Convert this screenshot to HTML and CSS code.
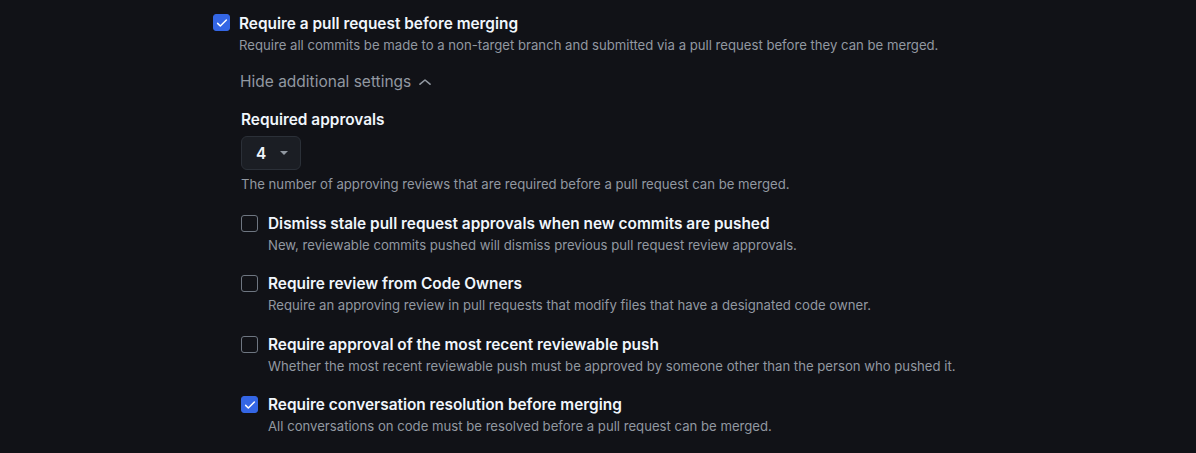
FILE: index.html
```html
<!DOCTYPE html>
<html>
<head>
<meta charset="utf-8">
<link rel="stylesheet" href="styles.css">
</head>
<body>
<div class="page">
  <div class="rule">
    <div class="row">
      <span class="cb checked"><svg viewBox="0 0 16 16" width="14" height="14"><path d="M3 8.4l3.1 3.1L13 4.6" fill="none" stroke="#fff" stroke-width="1.7" stroke-linecap="round" stroke-linejoin="round"/></svg></span>
      <div class="text">
        <div class="title">Require a pull request before merging</div>
        <div class="desc">Require all commits be made to a non-target branch and submitted via a pull request before they can be merged.</div>
      </div>
    </div>
    <div class="sub">
      <div class="toggle">Hide additional settings <svg viewBox="0 0 12 6" width="12" height="6"><path d="M1 5.2L6 1l5 4.2" fill="none" stroke="#9198a1" stroke-width="1.6" stroke-linecap="round" stroke-linejoin="round"/></svg></div>
      <div class="approvals">
        <div class="label">Required approvals</div>
        <div class="select"><span class="num">4</span><span class="caret"></span></div>
        <div class="desc">The number of approving reviews that are required before a pull request can be merged.</div>
      </div>
      <div class="row nested">
        <span class="cb"></span>
        <div class="text">
          <div class="title">Dismiss stale pull request approvals when new commits are pushed</div>
          <div class="desc">New, reviewable commits pushed will dismiss previous pull request review approvals.</div>
        </div>
      </div>
      <div class="row nested">
        <span class="cb"></span>
        <div class="text">
          <div class="title">Require review from Code Owners</div>
          <div class="desc">Require an approving review in pull requests that modify files that have a designated code owner.</div>
        </div>
      </div>
      <div class="row nested">
        <span class="cb"></span>
        <div class="text">
          <div class="title">Require approval of the most recent reviewable push</div>
          <div class="desc">Whether the most recent reviewable push must be approved by someone other than the person who pushed it.</div>
        </div>
      </div>
      <div class="row nested">
        <span class="cb checked"><svg viewBox="0 0 16 16" width="14" height="14"><path d="M3 8.4l3.1 3.1L13 4.6" fill="none" stroke="#fff" stroke-width="1.7" stroke-linecap="round" stroke-linejoin="round"/></svg></span>
        <div class="text">
          <div class="title">Require conversation resolution before merging</div>
          <div class="desc">All conversations on code must be resolved before a pull request can be merged.</div>
        </div>
      </div>
    </div>
  </div>
</div>
</body>
</html>
```
FILE: styles.css
```css
html, body {
  margin: 0;
  padding: 0;
  background: #111217;
  font-family: Inter, "Liberation Sans", sans-serif;
  color: #f0f6fc;
}
.page {
  padding: 13px 0 0 213px;
  height: 440px;
}
.row {
  display: flex;
  gap: 9px;
  align-items: flex-start;
}
.cb {
  width: 15px;
  height: 15px;
  flex: 0 0 auto;
  border: 1px solid #6e7681;
  border-radius: 3px;
  margin-top: 1px;
  display: flex;
  align-items: center;
  justify-content: center;
}
.cb.checked {
  background: #3466e5;
  border-color: #3466e5;
}
.title {
  font-size: 15.4px;
  font-weight: 600;
  line-height: 22px;
  color: #f0f6fc;
}
.desc {
  font-size: 13.15px;
  line-height: 20px;
  color: #9198a1;
}
.sub {
  padding-left: 27px;
}
.toggle {
  margin-top: 16px;
  font-size: 15.5px;
  line-height: 22px;
  color: #9198a1;
  display: flex;
  align-items: center;
  gap: 8px;
}
.approvals {
  margin-top: 16px;
  padding-left: 1px;
}
.label {
  font-size: 15.4px;
  font-weight: 600;
  line-height: 22px;
}
.select {
  margin-top: 5px;
  width: 58px;
  height: 32px;
  border: 1px solid #2b3038;
  border-radius: 6px;
  background: #1b1e24;
  display: flex;
  align-items: center;
}
.num {
  font-size: 15.4px;
  font-weight: 600;
  margin-left: 14px;
}
.caret {
  margin-left: 14px;
  width: 0;
  height: 0;
  border-left: 4px solid transparent;
  border-right: 4px solid transparent;
  border-top: 4px solid #9198a1;
}
.approvals .desc {
  margin-top: 4px;
}
.nested {
  margin-top: 18.5px;
  padding-left: 1px;
  gap: 10px;
}
.nested .cb {
  margin-top: 2px;
}
```
